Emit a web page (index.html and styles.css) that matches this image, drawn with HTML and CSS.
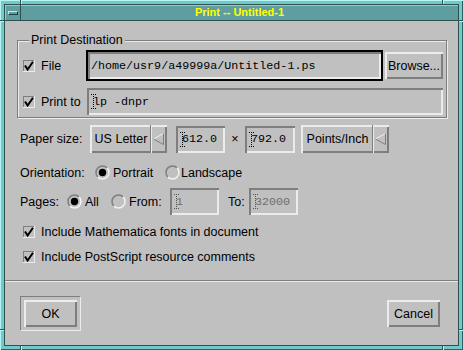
FILE: index.html
```html
<!DOCTYPE html>
<html>
<head>
<meta charset="utf-8">
<link rel="stylesheet" href="styles.css">
</head>
<body>
<div class="window">
  <span class="notch nh n-top-l"></span>
  <span class="notch nh n-top-r"></span>
  <span class="notch nh n-bot-l"></span>
  <span class="notch nh n-bot-r"></span>
  <span class="notch nv n-left-t"></span>
  <span class="notch nv n-left-b"></span>
  <span class="notch nv n-right-t"></span>
  <span class="notch nv n-right-b"></span>
  <div class="inner">
    <div class="titlebar">
      <div class="menu-btn"><span class="menu-icon"></span></div>
      <div class="title">Print -- Untitled-1</div>
    </div>
    <div class="content">
      <div class="main">
        <div class="group">
          <span class="group-title">Print Destination</span>
          <div class="row row-file">
            <label class="cb-label lbl-file">
              <svg class="cb" width="12" height="12" viewBox="0 0 12 12"><rect width="12" height="12" fill="#ececec"/><rect width="11" height="11" fill="#7e7e7e"/><rect x="1" y="1" width="10" height="10" fill="#c0c0c0"/><path d="M2 5.5 L4.6 9.5 L10 1.8" stroke="#000" stroke-width="2" fill="none"/></svg>
              File
            </label>
            <div class="field focused f-file">/home/usr9/a49999a/Untitled-1.ps</div>
            <div class="btn browse">Browse...</div>
          </div>
          <div class="row row-print">
            <label class="cb-label lbl-print">
              <svg class="cb" width="12" height="12" viewBox="0 0 12 12"><rect width="12" height="12" fill="#ececec"/><rect width="11" height="11" fill="#7e7e7e"/><rect x="1" y="1" width="10" height="10" fill="#c0c0c0"/><path d="M2 5.5 L4.6 9.5 L10 1.8" stroke="#000" stroke-width="2" fill="none"/></svg>
              Print to
            </label>
            <div class="field f-print"><svg class="caret" width="5" height="15" viewBox="0 0 5 15"><path d="M0 0.5h5M0 14.5h5M2.5 0v15" stroke="#000" stroke-dasharray="1 1"/></svg>lp -dnpr</div>
          </div>
        </div>

        <div class="row paper">
          <span class="row-label w-paper">Paper size:</span>
          <div class="option opt-us">
            <span class="opt-text">US Letter</span>
            <span class="opt-arrow"><svg width="11" height="12" viewBox="0 0 11 12"><polygon points="0.5,6 10.5,0.5 10.5,11.5" fill="#c0c0c0"/><path d="M0.5 6 L10.5 0.5" stroke="#f2f2f2"/><path d="M10.5 0.5 V11.5 L0.5 6" stroke="#7e7e7e" fill="none"/></svg></span>
          </div>
          <div class="field small f-w"><svg class="caret" width="5" height="15" viewBox="0 0 5 15"><path d="M0 0.5h5M0 14.5h5M2.5 0v15" stroke="#000" stroke-dasharray="1 1"/></svg>612.0</div>
          <span class="times">×</span>
          <div class="field small f-h"><svg class="caret" width="5" height="15" viewBox="0 0 5 15"><path d="M0 0.5h5M0 14.5h5M2.5 0v15" stroke="#000" stroke-dasharray="1 1"/></svg>792.0</div>
          <div class="option opt-units">
            <span class="opt-text">Points/Inch</span>
            <span class="opt-arrow"><svg width="11" height="12" viewBox="0 0 11 12"><polygon points="0.5,6 10.5,0.5 10.5,11.5" fill="#c0c0c0"/><path d="M0.5 6 L10.5 0.5" stroke="#f2f2f2"/><path d="M10.5 0.5 V11.5 L0.5 6" stroke="#7e7e7e" fill="none"/></svg></span>
          </div>
        </div>

        <div class="row orient">
          <span class="row-label w-orient">Orientation:</span>
          <label class="radio r-portrait">
            <svg width="15" height="15" viewBox="0 0 15 15"><path d="M2.9 12.1 A6.5 6.5 0 0 1 12.1 2.9" stroke="#7e7e7e" stroke-width="1.5" fill="none"/><path d="M12.1 2.9 A6.5 6.5 0 0 1 2.9 12.1" stroke="#f2f2f2" stroke-width="1.5" fill="none"/><circle cx="7.5" cy="7.5" r="3.7" fill="#000"/></svg>
            Portrait
          </label>
          <label class="radio r-land">
            <svg width="15" height="15" viewBox="0 0 15 15"><path d="M2.9 12.1 A6.5 6.5 0 0 1 12.1 2.9" stroke="#7e7e7e" stroke-width="1.5" fill="none"/><path d="M12.1 2.9 A6.5 6.5 0 0 1 2.9 12.1" stroke="#f2f2f2" stroke-width="1.5" fill="none"/></svg>
            Landscape
          </label>
        </div>

        <div class="row pages">
          <span class="row-label w-pages">Pages:</span>
          <label class="radio r-all">
            <svg width="15" height="15" viewBox="0 0 15 15"><path d="M2.9 12.1 A6.5 6.5 0 0 1 12.1 2.9" stroke="#7e7e7e" stroke-width="1.5" fill="none"/><path d="M12.1 2.9 A6.5 6.5 0 0 1 2.9 12.1" stroke="#f2f2f2" stroke-width="1.5" fill="none"/><circle cx="7.5" cy="7.5" r="3.7" fill="#000"/></svg>
            All
          </label>
          <label class="radio r-from">
            <svg width="15" height="15" viewBox="0 0 15 15"><path d="M2.9 12.1 A6.5 6.5 0 0 1 12.1 2.9" stroke="#7e7e7e" stroke-width="1.5" fill="none"/><path d="M12.1 2.9 A6.5 6.5 0 0 1 2.9 12.1" stroke="#f2f2f2" stroke-width="1.5" fill="none"/></svg>
            From:
          </label>
          <div class="field small disabled f-from"><svg class="caret" width="5" height="15" viewBox="0 0 5 15"><path d="M0 0.5h5M0 14.5h5M2.5 0v15" stroke="#555" stroke-dasharray="1 1"/></svg>1</div>
          <span class="to-label">To:</span>
          <div class="field small disabled f-to"><svg class="caret" width="5" height="15" viewBox="0 0 5 15"><path d="M0 0.5h5M0 14.5h5M2.5 0v15" stroke="#555" stroke-dasharray="1 1"/></svg>32000</div>
        </div>

        <div class="row check-row cr1">
          <label class="cb-label">
            <svg class="cb" width="12" height="12" viewBox="0 0 12 12"><rect width="12" height="12" fill="#ececec"/><rect width="11" height="11" fill="#7e7e7e"/><rect x="1" y="1" width="10" height="10" fill="#c0c0c0"/><path d="M2 5.5 L4.6 9.5 L10 1.8" stroke="#000" stroke-width="2" fill="none"/></svg>
            Include Mathematica fonts in document
          </label>
        </div>
        <div class="row check-row cr2">
          <label class="cb-label">
            <svg class="cb" width="12" height="12" viewBox="0 0 12 12"><rect width="12" height="12" fill="#ececec"/><rect width="11" height="11" fill="#7e7e7e"/><rect x="1" y="1" width="10" height="10" fill="#c0c0c0"/><path d="M2 5.5 L4.6 9.5 L10 1.8" stroke="#000" stroke-width="2" fill="none"/></svg>
            Include PostScript resource comments
          </label>
        </div>
      </div>
      <div class="sep"></div>
      <div class="actions">
        <div class="btn-wrap default"><div class="btn action">OK</div></div>
        <div class="btn-wrap"><div class="btn action">Cancel</div></div>
      </div>
    </div>
  </div>
</div>
</body>
</html>
```

FILE: styles.css
```css
* { box-sizing: border-box; }
body {
  margin: 0;
  font-family: "Liberation Sans", Arial, sans-serif;
  font-size: 12.5px;
  color: #000;
}
.window {
  position: relative;
  width: 463px;
  height: 350px;
  padding: 4px;
  background: #6fcaca;
  box-shadow: inset 1px 1px 0 #b8f4f4, inset -1px -1px 0 #2f5f5f;
}
.notch { position: absolute; }
.nh { width: 2px; height: 4px; border-left: 1px solid #2f5656; background: #b8f4f4; }
.nv { width: 4px; height: 2px; border-top: 1px solid #2f5656; background: #b8f4f4; }
.n-top-l { left: 20px; top: 0; }
.n-top-r { left: 442px; top: 0; }
.n-bot-l { left: 20px; bottom: 0; }
.n-bot-r { left: 442px; bottom: 0; }
.n-left-t { left: 0; top: 20px; }
.n-left-b { left: 0; top: 329px; }
.n-right-t { right: 0; top: 20px; }
.n-right-b { right: 0; top: 329px; }

.inner {
  width: 455px;
  height: 342px;
  border: 1px solid #2f4f4f;
  display: flex;
  flex-direction: column;
}
.titlebar {
  height: 16px;
  flex: none;
  display: flex;
  background: #5f9ea0;
  border-bottom: 1px solid #2f4f4f;
}
.menu-btn {
  width: 16px;
  border-right: 1px solid #2f4f4f;
  display: flex;
  align-items: center;
  justify-content: center;
  box-shadow: inset 1px 1px 0 #8ccfcf;
}
.menu-icon {
  width: 10px;
  height: 4px;
  border-top: 1px solid #b8f0f0;
  border-left: 1px solid #b8f0f0;
  border-bottom: 1px solid #1f3f3f;
  border-right: 1px solid #1f3f3f;
}
.title {
  flex: 1;
  text-align: center;
  color: #ffff00;
  font-weight: bold;
  font-size: 11px;
  line-height: 15px;
  box-shadow: inset 0 1px 0 #8ccfcf;
}

.content {
  flex: 1;
  background: #c0c0c0;
  display: flex;
  flex-direction: column;
}
.main {
  height: 259px;
  flex: none;
  padding-top: 19px;
}
.sep {
  height: 2px;
  flex: none;
  border-top: 1px solid #7e7e7e;
  border-bottom: 1px solid #ececec;
}

.group {
  position: relative;
  margin-left: 12px;
  width: 430px;
  height: 78px;
  border: 1px solid #7e7e7e;
  box-shadow: inset 1px 1px 0 #ececec, 1px 1px 0 #ececec;
  padding: 9px 3px 0 5px;
}
.group-title {
  position: absolute;
  top: -8px;
  left: 11px;
  padding: 0 2px;
  line-height: 14px;
  background: #c0c0c0;
}

.row { display: flex; align-items: center; }
.row-file { height: 31px; }
.row-print { height: 27px; margin-top: 7px; }

.cb-label { display: flex; align-items: center; white-space: nowrap; }
.cb { flex: none; margin-right: 6px; }
.lbl-file { width: 63px; }
.lbl-print { width: 64px; }

.field {
  display: flex;
  align-items: center;
  background: #c0c0c0;
  font-family: "Liberation Mono", "Courier New", monospace;
  font-size: 11.7px;
  white-space: pre;
  box-shadow: inset 2px 2px 0 #7e7e7e, inset -2px -2px 0 #ececec;
  padding-left: 6px;
}
.field.focused {
  border: 2px solid #000;
  padding-left: 3px;
}
.f-file { width: 297px; height: 31px; }
.f-print { width: 356px; height: 27px; }
.caret { flex: none; margin-left: -2px; margin-right: -3px; }
.field.small { height: 27px; }
.disabled { color: #6e6e6e; }

.btn {
  display: flex;
  align-items: center;
  justify-content: center;
  background: #c0c0c0;
  box-shadow: inset 2px 2px 0 #ececec, inset -2px -2px 0 #7e7e7e;
}
.browse { width: 58px; height: 27px; margin-left: 2px; }

.paper { margin-left: 15px; margin-top: 7px; height: 28px; }
.row-label { flex: none; white-space: nowrap; }
.w-paper { width: 70px; }
.option {
  display: flex;
  height: 28px;
  box-shadow: inset 2px 2px 0 #ececec, inset -2px -2px 0 #7e7e7e;
}
.opt-us { width: 77px; }
.opt-units { width: 88px; margin-left: 6px; }
.opt-text {
  flex: 1;
  display: flex;
  align-items: center;
  justify-content: center;
  padding-left: 2px;
  white-space: nowrap;
}
.opt-arrow {
  width: 17px;
  flex: none;
  display: flex;
  align-items: center;
  padding-left: 2px;
  border-left: 1px solid #7e7e7e;
  box-shadow: inset 1px 0 0 #ececec;
}
.f-w { width: 49px; margin-left: 9px; }
.times { width: 20px; text-align: center; }
.f-h { width: 50px; }

.orient { margin-left: 15px; margin-top: 12px; height: 15px; }
.w-orient { width: 75px; }
.radio { display: flex; align-items: center; white-space: nowrap; }
.radio svg { flex: none; margin-right: 3px; }
.r-portrait { width: 70px; }
.r-land svg { margin-right: 1px; }

.pages { margin-left: 15px; margin-top: 8px; height: 27px; }
.w-pages { width: 47px; }
.r-all { width: 44px; }
.r-from { width: 59px; }
.f-from { width: 49px; }
.to-label { margin-left: 9px; width: 21px; }
.f-to { width: 49px; }

.check-row { margin-left: 18px; height: 14px; }
.cr1 { margin-top: 10px; }
.cr2 { margin-top: 11px; }

.actions {
  flex: 1;
  display: flex;
  justify-content: space-between;
  align-items: flex-start;
  padding: 14px 14px 0 15px;
}
.btn-wrap {
  padding: 3px;
  border: 1px solid transparent;
}
.btn-wrap.default {
  border-color: #7e7e7e #ececec #ececec #7e7e7e;
}
.action { width: 53px; height: 27px; }
```
